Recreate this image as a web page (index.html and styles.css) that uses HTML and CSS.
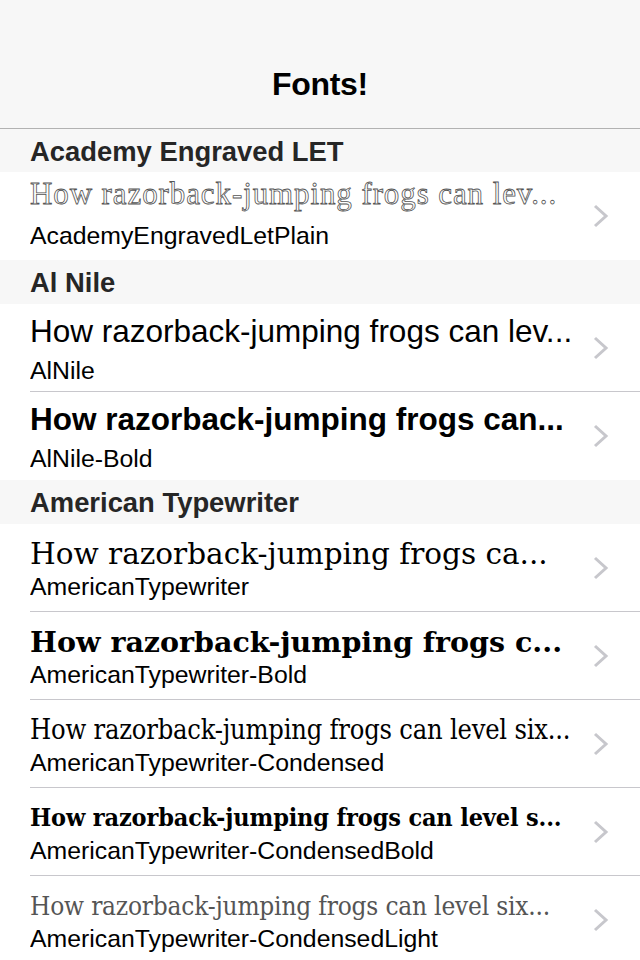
FILE: index.html
```html
<!DOCTYPE html>
<html lang="en">
<head>
<meta charset="utf-8">
<title>Fonts!</title>
<link rel="stylesheet" href="styles.css">
</head>
<body>
<div class="screen">
  <header class="navbar">
    <h1 class="nav-title">Fonts!</h1>
  </header>
  <main class="table">
    <section class="section">
      <h2 class="section-header">Academy Engraved LET</h2>
      <div class="cell cell-last cell-engraved">
        <div class="cell-body">
          <div class="cell-text">
            <div class="cell-title f-engraved">How razorback-jumping frogs can lev...</div>
            <div class="cell-subtitle">AcademyEngravedLetPlain</div>
          </div>
          <svg class="chevron" viewBox="0 0 16 24" width="16" height="24"><polyline points="2,2 13,12 2,22"/></svg>
        </div>
      </div>
    </section>
    <section class="section">
      <h2 class="section-header">Al Nile</h2>
      <div class="cell">
        <div class="cell-body">
          <div class="cell-text">
            <div class="cell-title f-nile">How razorback-jumping frogs can lev...</div>
            <div class="cell-subtitle">AlNile</div>
          </div>
          <svg class="chevron" viewBox="0 0 16 24" width="16" height="24"><polyline points="2,2 13,12 2,22"/></svg>
        </div>
      </div>
      <div class="cell cell-last">
        <div class="cell-body">
          <div class="cell-text">
            <div class="cell-title f-nile f-bold">How razorback-jumping frogs can...</div>
            <div class="cell-subtitle">AlNile-Bold</div>
          </div>
          <svg class="chevron" viewBox="0 0 16 24" width="16" height="24"><polyline points="2,2 13,12 2,22"/></svg>
        </div>
      </div>
    </section>
    <section class="section">
      <h2 class="section-header">American Typewriter</h2>
      <div class="cell">
        <div class="cell-body">
          <div class="cell-text">
            <div class="cell-title f-type">How razorback-jumping frogs ca...</div>
            <div class="cell-subtitle">AmericanTypewriter</div>
          </div>
          <svg class="chevron" viewBox="0 0 16 24" width="16" height="24"><polyline points="2,2 13,12 2,22"/></svg>
        </div>
      </div>
      <div class="cell">
        <div class="cell-body">
          <div class="cell-text">
            <div class="cell-title f-type f-type-bold">How razorback-jumping frogs c...</div>
            <div class="cell-subtitle">AmericanTypewriter-Bold</div>
          </div>
          <svg class="chevron" viewBox="0 0 16 24" width="16" height="24"><polyline points="2,2 13,12 2,22"/></svg>
        </div>
      </div>
      <div class="cell">
        <div class="cell-body">
          <div class="cell-text">
            <div class="cell-title f-cond">How razorback-jumping frogs can level six...</div>
            <div class="cell-subtitle">AmericanTypewriter-Condensed</div>
          </div>
          <svg class="chevron" viewBox="0 0 16 24" width="16" height="24"><polyline points="2,2 13,12 2,22"/></svg>
        </div>
      </div>
      <div class="cell">
        <div class="cell-body">
          <div class="cell-text">
            <div class="cell-title f-cond f-cond-bold">How razorback-jumping frogs can level s...</div>
            <div class="cell-subtitle">AmericanTypewriter-CondensedBold</div>
          </div>
          <svg class="chevron" viewBox="0 0 16 24" width="16" height="24"><polyline points="2,2 13,12 2,22"/></svg>
        </div>
      </div>
      <div class="cell">
        <div class="cell-body">
          <div class="cell-text">
            <div class="cell-title f-cond f-cond-light">How razorback-jumping frogs can level six...</div>
            <div class="cell-subtitle">AmericanTypewriter-CondensedLight</div>
          </div>
          <svg class="chevron" viewBox="0 0 16 24" width="16" height="24"><polyline points="2,2 13,12 2,22"/></svg>
        </div>
      </div>
    </section>
  </main>
</div>
</body>
</html>
```
FILE: styles.css
```css
html, body {
  margin: 0;
  padding: 0;
  background: #ffffff;
}

body {
  font-family: "Liberation Sans", Arial, sans-serif;
  color: #000;
}

.screen {
  width: 640px;
  height: 960px;
  overflow: hidden;
}

.navbar {
  box-sizing: border-box;
  height: 129px;
  padding-top: 40px;
  background: #f7f7f7;
  border-bottom: 1px solid #b2b2b2;
  display: flex;
  align-items: center;
  justify-content: center;
}

.nav-title {
  margin: 0;
  font-size: 32px;
  font-weight: bold;
  letter-spacing: -0.3px;
  color: #000;
}

.section-header {
  margin: 0;
  box-sizing: border-box;
  height: 44px;
  padding-left: 30px;
  padding-top: 2px;
  background: #f7f7f7;
  display: flex;
  align-items: center;
  font-size: 27.4px;
  font-weight: bold;
  color: #262626;
}

.section:first-child .section-header {
  height: 43px;
}

.cell {
  height: 88px;
  padding-left: 30px;
  background: #fff;
  display: flex;
}

.cell-body {
  flex: 1;
  min-width: 0;
  box-sizing: border-box;
  border-bottom: 1px solid #c8c7cc;
  display: flex;
  align-items: center;
  padding-right: 31px;
}

.cell-last .cell-body {
  border-bottom: none;
}

.cell-text {
  flex: 1;
  min-width: 0;
  display: flex;
  flex-direction: column;
  white-space: nowrap;
  overflow: hidden;
}

.cell-engraved .cell-text {
  padding-bottom: 8px;
}

.cell-title {
  line-height: 38px;
  font-size: 31px;
}

.cell-subtitle {
  font-size: 24.8px;
  line-height: 28px;
}

.f-engraved {
  font-family: "Liberation Serif", serif;
  font-size: 31px;
  letter-spacing: 0.9px;
  color: #fff;
  -webkit-text-stroke: 0.8px #555;
  line-height: 40px;
  margin-bottom: 8px;
}

.f-nile {
  font-family: "Liberation Sans", Arial, sans-serif;
  font-size: 31.5px;
  line-height: 40px;
  margin-bottom: 6px;
}

.f-bold {
  font-weight: bold;
}

.f-type {
  font-family: "DejaVu Serif", serif;
  font-size: 29.5px;
}

.f-type-bold {
  font-weight: bold;
  font-size: 28.5px;
}

.f-cond {
  font-family: "DejaVu Serif Condensed", "DejaVu Serif", serif;
  font-stretch: condensed;
  font-size: 27px;
  letter-spacing: -0.2px;
}

.f-cond-bold {
  font-weight: bold;
  font-size: 25px;
  letter-spacing: -0.15px;
}

.f-cond-light {
  font-size: 26px;
  color: #555;
}

.chevron {
  flex: none;
  margin-left: 12px;
  fill: none;
  stroke: #c7c7cc;
  stroke-width: 3;
}
```
